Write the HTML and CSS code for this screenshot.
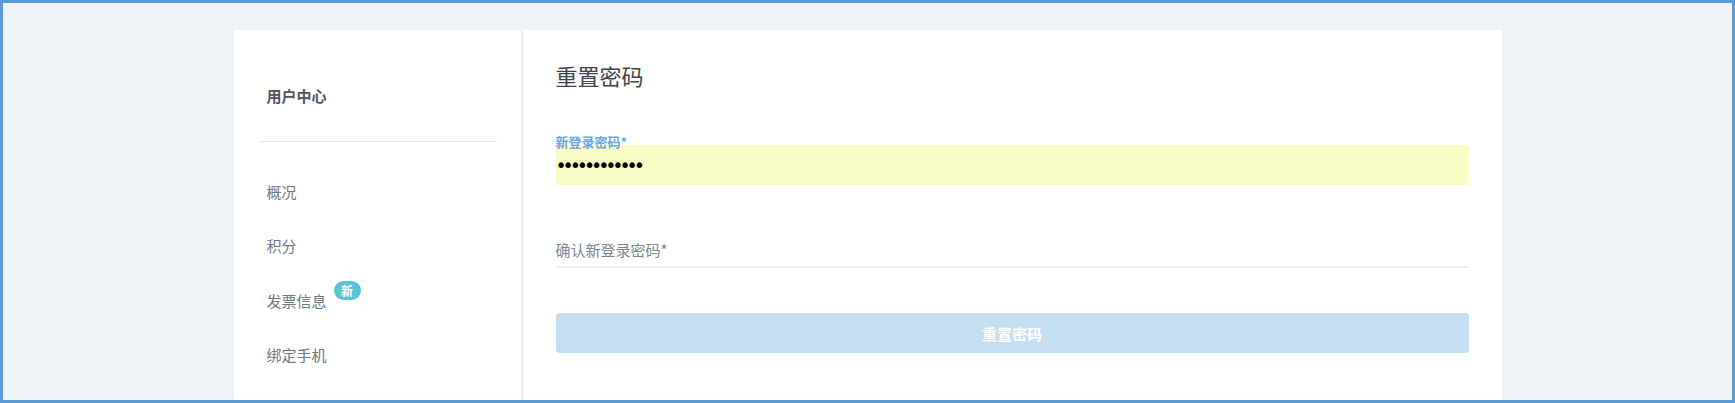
FILE: index.html
```html
<!DOCTYPE html>
<html lang="zh-CN">
<head>
<meta charset="utf-8">
<title>重置密码</title>
<link rel="stylesheet" href="styles.css">
</head>
<body>
<div class="frame">
  <div class="page">
    <aside class="sidebar">
      <div class="side-title">用户中心</div>
      <div class="side-divider"></div>
      <nav class="side-nav">
        <a class="side-item" href="#">概况</a>
        <a class="side-item" href="#">积分</a>
        <a class="side-item" href="#">发票信息<span class="badge">新</span></a>
        <a class="side-item" href="#">绑定手机</a>
      </nav>
    </aside>
    <main class="main">
      <h1 class="title">重置密码</h1>
      <form class="form">
        <div class="field">
          <label class="field-label" for="pw1">新登录密码*</label>
          <input id="pw1" class="input input-filled" type="password" value="abcdefghijkl" readonly>
        </div>
        <div class="field field-confirm">
          <input class="input input-line" type="password" placeholder="确认新登录密码*">
        </div>
        <button class="btn" type="button">重置密码</button>
      </form>
    </main>
  </div>
</div>
</body>
</html>
```
FILE: styles.css
```css
* { box-sizing: border-box; }
html, body { margin: 0; padding: 0; height: 100%; }
body {
  font-family: "Noto Sans CJK SC", "Noto Sans", sans-serif;
  background: #eff3f5;
}
.frame {
  height: 100vh;
  border: 3px solid #5b9bd5;
  display: flex;
  flex-direction: column;
  overflow: hidden;
}
.page {
  flex: 1;
  width: 1268px;
  margin: 27px auto 0;
  background: #fff;
  display: flex;
}
.sidebar {
  width: 289px;
  border-right: 2px solid #e9eef1;
  padding-top: 56px;
}
.side-title {
  padding-left: 33px;
  font-size: 15px;
  line-height: 20px;
  font-weight: 700;
  color: #4d545b;
}
.side-divider {
  height: 1px;
  background: #e4e9ec;
  margin: 35px 24px 0 25px;
}
.side-nav {
  display: flex;
  flex-direction: column;
  padding-top: 22px;
}
.side-item {
  height: 54.5px;
  display: flex;
  align-items: center;
  padding-left: 33px;
  font-size: 15px;
  color: #6f7780;
  text-decoration: none;
}
.badge {
  position: relative;
  top: -10px;
  margin-left: 7px;
  width: 27px;
  height: 19px;
  border-radius: 10px;
  background: #5bc4d4;
  color: #fff;
  font-size: 12px;
  font-weight: 700;
  display: inline-flex;
  align-items: center;
  justify-content: center;
}
.main {
  flex: 1;
  padding: 30px 33px 0 33px;
}
.title {
  margin: 0;
  font-size: 22px;
  line-height: 30px;
  font-weight: 400;
  color: #3d4349;
}
.form {
  display: flex;
  flex-direction: column;
}
.field {
  display: flex;
  flex-direction: column;
}
.field:first-child { margin-top: 44px; }
.field-label {
  font-size: 13px;
  line-height: 16px;
  font-weight: 700;
  color: #6ba6e6;
  margin-bottom: -5px;
  position: relative;
  z-index: 1;
}
.input {
  width: 100%;
  height: 40px;
  border: 0;
  outline: none;
  padding: 0;
  margin: 0;
  background: transparent;
}
.input-filled {
  background: #f9fcc2;
  font-family: "DejaVu Sans", sans-serif;
  font-size: 19px;
  letter-spacing: -4.1px;
  color: #000;
}
.field-confirm { margin-top: 42px; }
.input-line {
  height: 41px;
  padding-top: 5px;
  border-bottom: 2px solid #ebf0f4;
  font-family: "Noto Sans CJK SC", sans-serif;
  font-size: 15px;
}
.input-line::placeholder { color: #7d858d; opacity: 1; }
.btn {
  margin-top: 45px;
  height: 40px;
  border: 0;
  border-radius: 4px;
  background: #c4def2;
  color: #fff;
  font-family: "Noto Sans CJK SC", sans-serif;
  font-size: 15px;
  font-weight: 700;
  padding: 0;
}
```
